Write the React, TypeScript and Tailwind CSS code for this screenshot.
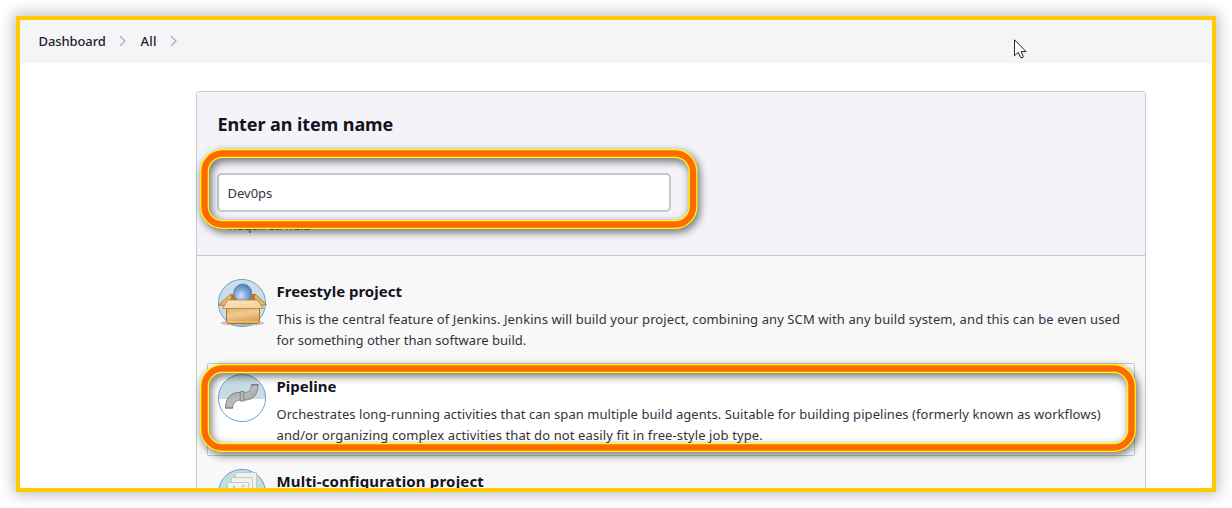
import React from "react";

function Chevron({ className }: { className: string }) {
  return (
    <svg className={className} width="8" height="12" viewBox="0 0 8 12" fill="none" stroke="#a9a9b8" strokeWidth="1.3">
      <path d="M1.2 1.2 6 6 1.2 10.8" />
    </svg>
  );
}

function BoxIcon() {
  return (
    <svg width="50" height="50" viewBox="0 0 50 50">
      <defs>
        <radialGradient id="ball" cx="0.4" cy="0.65" r="0.7">
          <stop offset="0" stopColor="#d3e4f8" />
          <stop offset="0.45" stopColor="#88ade0" />
          <stop offset="1" stopColor="#4674b6" />
        </radialGradient>
        <linearGradient id="front" x1="0" y1="0" x2="0.3" y2="1">
          <stop offset="0" stopColor="#dfa556" />
          <stop offset="0.5" stopColor="#efcb91" />
          <stop offset="1" stopColor="#d9a153" />
        </linearGradient>
        <linearGradient id="flap" x1="0" y1="0" x2="1" y2="1">
          <stop offset="0" stopColor="#fae8c8" />
          <stop offset="1" stopColor="#f0cc94" />
        </linearGradient>
      </defs>
      <circle cx="25" cy="25" r="23.6" fill="#c9dfe5" stroke="#6f9fd4" />
      <ellipse cx="25.500" cy="45" rx="22" ry="3" fill="#8a8a82" opacity=".45" />
      <path d="M15 16h23l3 8H11z" fill="#b8792d" />
      <path d="M14 16 1.500 27l6 .5L15 20zM38 16l11.500 10.500-6.500 1L37 20z" fill="#e7b66c" stroke="#a66d20" strokeWidth=".8" />
      <circle cx="25.700" cy="15" r="9" fill="url(#ball)" stroke="#5580b8" strokeWidth=".8" />
      <path d="M9.500 29h33v14.500l-1.500 2H11l-1.500-2z" fill="url(#front)" stroke="#ad7328" />
      <path d="M11 22h29.500l6 8.500h-41z" fill="url(#flap)" stroke="#b77e33" strokeWidth=".8" />
      <path d="M11 43.800h30" stroke="#f6d8a4" strokeWidth=".8" />
    </svg>
  );
}

function PipeIcon() {
  return (
    <svg width="50" height="50" viewBox="0 0 50 50">
      <defs>
        <linearGradient id="pipe" x1="0" y1="0" x2="1" y2="1">
          <stop offset="0" stopColor="#949494" />
          <stop offset="0.5" stopColor="#bcbcbc" />
          <stop offset="1" stopColor="#8c8c8c" />
        </linearGradient>
      </defs>
      <circle cx="25" cy="25" r="23.500" fill="#fff" />
      <path d="M1.500 26a23.500 24.500 0 0 1 47 0z" fill="#c5dce3" />
      <circle cx="25" cy="25" r="23.600" fill="none" stroke="#6f9fd4" />
      <path d="M8.500 35C8.500 25 14 19.500 21 19.500h6c5 0 7-2 7.500-8h6.500C41 21 37 26.500 29 27h-5c-5 0-8 2.500-8.500 8z" fill="url(#pipe)" stroke="#858585" />
      <path d="M23.200 18.500h3.800v9.500h-3.800z" fill="#b5b5b5" stroke="#777" strokeWidth=".8" />
      <path d="M34 11.800h7.500M8 35h8" stroke="#7d7d7d" strokeWidth="1.200" />
    </svg>
  );
}

function PagesIcon() {
  return (
    <svg width="50" height="50" viewBox="0 0 50 50">
      <circle cx="25" cy="25" r="23.600" fill="#c5dce3" stroke="#6f9fd4" />
      <g fill="#f1f1f0" stroke="#c4c8c7">
        <path d="M18.500 4.500h21v25h-21z" />
        <path d="M14.500 9.500h21v25h-21z" />
        <path d="M10.500 14.500h21v25h-21z" />
      </g>
      <path d="m16 18 2 2m7-1 2-2" stroke="#b6b6b6" strokeWidth="1.500" />
    </svg>
  );
}

function Ring({ className, width, height }: { className: string; width: number; height: number }) {
  const shape = { x: 4.5, y: 4.5, width: width - 9, height: height - 9, rx: 18 };
  return (
    <svg
      className={`pointer-events-none absolute overflow-visible [filter:drop-shadow(2px_3px_4px_rgba(0,0,0,.6))] ${className}`}
      width={width}
      height={height}
      fill="none"
    >
      <rect {...shape} stroke="#ffff00" strokeWidth="8.800" />
      <rect {...shape} stroke="#ff6a00" strokeWidth="6.400" />
    </svg>
  );
}

function Item({ icon, title, titleClass, lines, className }: {
  icon: React.ReactNode;
  title: string;
  titleClass: string;
  lines: { text: string; cls: string }[];
  className: string;
}) {
  return (
    <div className={`flex h-[93px] rounded-[2px] border pl-[9px] ${className}`}>
      <div className="mt-[9px] h-[50px] w-[50px] shrink-0">{icon}</div>
      <div className="ml-[9.500px] whitespace-nowrap pt-[11px]">
        <h3 className={`text-[15px] leading-[22px] font-bold text-[#14141f] ${titleClass}`}>{title}</h3>
        <div className="mt-[7px] text-[13px] leading-[21px] text-[#333340]">
          {lines.map((l) => (
            <p key={l.text} className={l.cls}>{l.text}</p>
          ))}
        </div>
      </div>
    </div>
  );
}

export default function App() {
  return (
    <div className="h-[508px] w-[1232px] overflow-hidden bg-white p-4 font-['Noto_Sans','Open_Sans',sans-serif]">
      <div className="relative h-[476px] w-[1200px] border-4 border-[#ffcb00] bg-white shadow-[0_0_14px_2px_rgba(0,0,0,0.28)]">
        <div className="h-full overflow-hidden">
          <nav className="flex h-[43px] items-center bg-[#f5f5f8] pl-[18.500px] text-[13px] font-medium text-[#22222e]">
            <span className="w-[67.500px] whitespace-nowrap tracking-[-0.1px]">Dashboard</span>
            <Chevron className="ml-[13px] -mt-[2px]" />
            <span className="ml-[13.500px] w-[17px] whitespace-nowrap tracking-[0.2px]">All</span>
            <Chevron className="ml-[12.500px] -mt-[2px]" />
          </nav>
          <main className="mt-[28px] ml-[176px] h-[430px] w-[950px] rounded-[3px] border border-[#c0cbd0] bg-[#f8f8f8]">
            <section className="h-[164px] border-b border-[#c0cbd0] bg-[#f3f3f8] pt-[20px] pl-[20.500px]">
              <h1 className="text-[18px] leading-[25px] font-bold tracking-[-0.08px] whitespace-nowrap text-[#14141f]">Enter an item name</h1>
              <input
                defaultValue="Dev0ps"
                className="mt-[36px] -ml-[0.500px] block h-[39px] w-[454px] rounded-[5px] border-2 border-[#bfcacd] bg-white pl-[8.500px] text-[13px] text-[#333340] outline-none"
              />
              <p className="mt-[4px] ml-[1px] text-[13px] leading-[19px] font-medium tracking-[-0.3px] whitespace-nowrap text-[#777782]">» Required field</p>
            </section>
            <div className="px-[10px] pt-[12px]">
              <Item
                className="border-transparent"
                icon={<BoxIcon />}
                title="Freestyle project"
                titleClass=""
                lines={[
                  { text: "This is the central feature of Jenkins. Jenkins will build your project, combining any SCM with any build system, and this can be even used", cls: "tracking-[0.092px]" },
                  { text: "for something other than software build.", cls: "tracking-[0.02px]" },
                ]}
              />
              <Item
                className="mt-[2px] border-[#c0cbd0] bg-white"
                icon={<PipeIcon />}
                title="Pipeline"
                titleClass=""
                lines={[
                  { text: "Orchestrates long-running activities that can span multiple build agents. Suitable for building pipelines (formerly known as workflows)", cls: "tracking-[0.055px]" },
                  { text: "and/or organizing complex activities that do not easily fit in free-style job type.", cls: "tracking-[0.11px]" },
                ]}
              />
              <Item className="mt-[2px] border-transparent" icon={<PagesIcon />} title="Multi-configuration project" titleClass="tracking-[0.17px]" lines={[]} />
            </div>
          </main>
        </div>
        <Ring className="top-[129px] left-[180px]" width={497.500} height={80} />
        <Ring className="top-[344px] left-[180px]" width={936} height={88} />
        <svg className="absolute top-[18.500px] left-[994px]" width="13" height="20" viewBox="0 0 13 20">
          <path d="M.5.8v16l3.700-3.500 2.500 5.300h2.200l.2-1.500-2-4.500h5z" fill="#fff" stroke="#22222e" />
        </svg>
      </div>
    </div>
  );
}
